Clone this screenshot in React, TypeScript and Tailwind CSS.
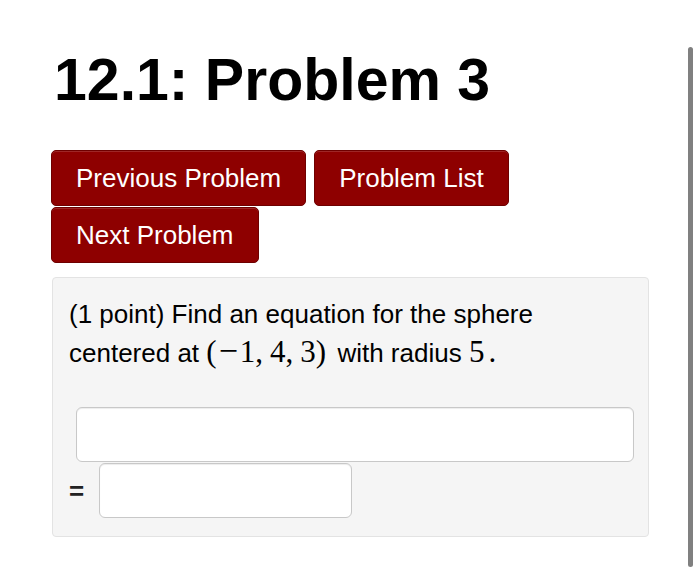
export default function App() {
  const font = { fontFamily: '"Liberation Sans", Arial, sans-serif' }
  const serif = { fontFamily: '"Liberation Serif", "Times New Roman", serif' }

  return (
    <main className="relative h-[570px] w-[700px] overflow-hidden bg-white text-black" style={font}>
      <div className="w-[598px] pl-[51px] pt-[48px] box-content">
        {/* Title */}
        <h1 className="ml-[3px] text-[59px] font-bold leading-[64px]">12.1: Problem 3</h1>

        {/* Nav buttons */}
        <div className="mt-[38px] flex flex-wrap gap-x-[8px] gap-y-[1px]">
          {['Previous Problem', 'Problem List', 'Next Problem'].map((label) => (
            <a
              key={label}
              href="#"
              className="rounded-[5px] border border-[#6e0000] bg-[#8e0000] px-[24px] py-[12px] text-[26px] leading-[30px] text-white shadow-[inset_0_1px_0_rgba(255,255,255,0.15)]"
            >
              {label}
            </a>
          ))}
        </div>

        {/* Problem well */}
        <section className="mt-[14px] ml-[1px] h-[260px] w-[597px] rounded-[4px] border border-[#e3e3e3] bg-[#f5f5f5] px-[16px] pt-[18px]">
          <p className="text-[26px] leading-[37px]">
            (1 point) Find an equation for the sphere
            <br />
            centered at{' '}
            <span className="mr-[4px] text-[31px]" style={serif}>
              (<span className="px-[2px] text-[34px] leading-none">−</span>1,<span className="ml-[7px]">4,</span>
              <span className="ml-[7px]">3)</span>
            </span>{' '}
            with radius{' '}
            <span className="text-[31px]" style={serif}>
              5<span className="ml-[4px]">.</span>
            </span>
          </p>

          <input
            type="text"
            className="mt-[35px] ml-[7px] block h-[55px] w-[558px] rounded-[6px] border border-[#c8c8c8] bg-white shadow-[inset_0_1px_1px_rgba(0,0,0,0.075)] outline-none"
          />

          <div className="mt-[1px] flex items-center">
            <span className="w-[30px] text-[26px] font-bold leading-[30px] text-[#222]">=</span>
            <input
              type="text"
              className="block h-[55px] w-[253px] rounded-[6px] border border-[#c8c8c8] bg-white shadow-[inset_0_1px_1px_rgba(0,0,0,0.075)] outline-none"
            />
          </div>
        </section>
      </div>

      {/* Scroll indicator */}
      <div className="absolute left-[688px] top-[47px] h-[520px] w-[5px] rounded-full bg-[#808080]" />
    </main>
  )
}
